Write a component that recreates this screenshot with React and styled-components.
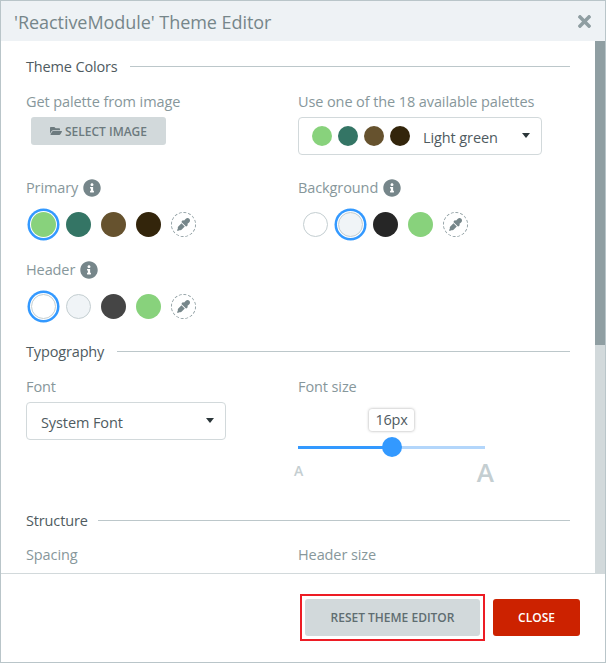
import React from "react";
import styled, { createGlobalStyle } from "styled-components";
import { FaEyeDropper, FaFolderOpen, FaInfoCircle, FaTimes } from "react-icons/fa";

const GlobalStyle = createGlobalStyle`
  html, body {
    margin: 0;
    padding: 0;
    background: #fff;
    font-family: "Open Sans", "Noto Sans", sans-serif;
  }
  * {
    box-sizing: border-box;
  }
`;

const PALETTE = ["#88d27c", "#347565", "#66522e", "#33250b"];

const App = () => {
  return (
    <Modal>
      <GlobalStyle />
      <Header>
        <Title>'ReactiveModule' Theme Editor</Title>
        <CloseIcon>
          <FaTimes />
        </CloseIcon>
      </Header>

      <BodyWrap>
        <Content>
          <SectionTitle $gap={12}>Theme Colors</SectionTitle>
          <Row>
            <div>
              <Label>Get palette from image</Label>
              <SelectImage>
                <FaFolderOpen />
                SELECT IMAGE
              </SelectImage>
            </div>
            <div>
              <Label>Use one of the 18 available palettes</Label>
              <Dropdown $width={244} $padLeft={13}>
                <PaletteDots>
                  {PALETTE.map((c) => (
                    <PaletteDot key={c} $color={c} />
                  ))}
                </PaletteDots>
                <DropdownText>Light green</DropdownText>
                <Caret />
              </Dropdown>
            </div>
          </Row>

          <Row $top={23}>
            <ColorField label="Primary" colors={["#88d27c", "#347565", "#66522e", "#33250b"]} selected={0} />
            <ColorField label="Background" colors={["#ffffff", "#f0f4f7", "#262626", "#88d27c"]} selected={1} />
          </Row>

          <Row $top={20}>
            <ColorField label="Header" colors={["#ffffff", "#f0f4f7", "#454545", "#88d27c"]} selected={0} />
          </Row>

          <SectionTitle $top={19} $gap={13}>Typography</SectionTitle>
          <Row $height={118}>
            <div>
              <Label>Font</Label>
              <Dropdown $width={200} $padLeft={14}>
                <DropdownText>System Font</DropdownText>
                <Caret />
              </Dropdown>
            </div>
            <div>
              <Label>Font size</Label>
              <Slider>
                <Tooltip>16px</Tooltip>
                <Track>
                  <TrackFill $percent={50} />
                </Track>
                <Thumb />
              </Slider>
              <SizeMarks>
                <SmallA>A</SmallA>
                <BigA>A</BigA>
              </SizeMarks>
            </div>
          </Row>

          <SectionTitle $top={15} $gap={10}>Structure</SectionTitle>
          <Row $top={15}>
            <Label>Spacing</Label>
            <Label>Header size</Label>
          </Row>
        </Content>
        <ScrollTrack>
          <ScrollThumb />
        </ScrollTrack>
      </BodyWrap>

      <Footer>
        <Highlight>
          <Button>RESET THEME EDITOR</Button>
        </Highlight>
        <Button $primary>CLOSE</Button>
      </Footer>
    </Modal>
  );
};

const ColorField = ({ label, colors, selected }) => (
  <div>
    <LabelRow>
      <FieldLabel>{label}</FieldLabel>
      <FaInfoCircle />
    </LabelRow>
    <Swatches>
      {colors.map((c, i) => (
        <Swatch key={c} $color={c} $selected={i === selected} $light={c === "#ffffff" || c === "#f0f4f7"} />
      ))}
      <Picker>
        <FaEyeDropper />
      </Picker>
    </Swatches>
  </div>
);

const Modal = styled.div`
  width: 606px;
  height: 663px;
  display: flex;
  flex-direction: column;
  border: 1px solid #b9c5c9;
  overflow: hidden;
  background: #fff;
`;

const Header = styled.div`
  height: 40px;
  flex: none;
  display: flex;
  align-items: center;
  justify-content: space-between;
  padding: 0 11px 0 13px;
  background: #eef2f5;
`;

const Title = styled.div`
  margin-top: 2px;
  font-size: 18px;
  font-weight: 500;
  letter-spacing: -0.05px;
  color: #76868a;
`;

const CloseIcon = styled.div`
  display: flex;
  color: #8f9ea2;
  font-size: 19px;
`;

const BodyWrap = styled.div`
  flex: 1;
  min-height: 0;
  display: flex;
`;

const Content = styled.div`
  flex: 1;
  min-width: 0;
  overflow: hidden;
  padding: 15px 25px 0 25px;
`;

const ScrollTrack = styled.div`
  width: 10px;
  flex: none;
  background: #d2d9db;
`;

const ScrollThumb = styled.div`
  height: 304px;
  background: #8f9ea2;
`;

const SectionTitle = styled.div`
  display: flex;
  align-items: center;
  gap: ${(p) => p.$gap}px;
  height: 20px;
  margin-top: ${(p) => p.$top || 0}px;
  font-size: 14.5px;
  letter-spacing: -0.15px;
  color: #4f5b5f;

  &::after {
    content: "";
    flex: 1;
    height: 1px;
    background: #bcc7ca;
  }
`;

const Row = styled.div`
  display: grid;
  grid-template-columns: 272px 272px;
  margin-top: ${(p) => (p.$top === undefined ? 16 : p.$top)}px;
  ${(p) => p.$height && `height: ${p.$height}px;`}
`;

const Label = styled.div`
  height: 20px;
  line-height: 20px;
  font-size: 14.5px;
  letter-spacing: -0.1px;
  color: #87979b;
`;

const LabelRow = styled.div`
  display: flex;
  align-items: center;
  gap: 5px;
  height: 20px;
  color: #76868a;

  svg {
    font-size: 18px;
  }
`;

const FieldLabel = styled.span`
  margin-bottom: 1px;
  font-size: 14.5px;
  letter-spacing: -0.1px;
  color: #87979b;
`;

const SelectImage = styled.button`
  display: flex;
  align-items: center;
  justify-content: center;
  gap: 3px;
  width: 135px;
  height: 28px;
  margin: 5px 0 0 5px;
  padding: 0;
  border: none;
  border-radius: 3px;
  background: #d2d9db;
  color: #6c7a7e;
  font-family: inherit;
  font-size: 12px;
  font-weight: 600;
  letter-spacing: 0;

  svg {
    font-size: 12px;
  }
`;

const Dropdown = styled.div`
  position: relative;
  display: flex;
  align-items: center;
  width: ${(p) => p.$width}px;
  height: 38px;
  margin-top: 5px;
  padding: 0 14px 0 ${(p) => p.$padLeft}px;
  border: 1px solid #d2d9db;
  border-radius: 4px;
  background: #fff;
`;

const PaletteDots = styled.div`
  display: flex;
  gap: 6px;
  margin-right: 13px;
`;

const PaletteDot = styled.span`
  width: 20px;
  height: 20px;
  border-radius: 50%;
  background: ${(p) => p.$color};
`;

const DropdownText = styled.span`
  margin-top: 2px;
  font-size: 14.5px;
  letter-spacing: -0.1px;
  color: #4f5b5f;
`;

const Caret = styled.span`
  position: absolute;
  right: 11px;
  top: 15px;
  width: 0;
  height: 0;
  border-left: 4.5px solid transparent;
  border-right: 4.5px solid transparent;
  border-top: 5px solid #2b3639;
`;

const Swatches = styled.div`
  display: flex;
  align-items: center;
  gap: 10px;
  height: 32px;
  margin-top: 10px;
  padding-left: 5px;
`;

const Swatch = styled.span`
  width: 25px;
  height: 25px;
  border-radius: 50%;
  background: ${(p) => p.$color};
  ${(p) => p.$light && "border: 1px solid #c4ced1;"}
  ${(p) => p.$selected && "box-shadow: 0 0 0 1px #fff, 0 0 0 3.5px #3399ff;"}
`;

const Picker = styled.span`
  display: flex;
  align-items: center;
  justify-content: center;
  width: 25px;
  height: 25px;
  border: 1px dashed #8f9ea2;
  border-radius: 50%;
  color: #76868a;

  svg {
    font-size: 13px;
  }
`;

const Slider = styled.div`
  position: relative;
  width: 187px;
  height: 50px;
  margin-top: 12px;
`;

const Track = styled.div`
  position: absolute;
  left: 0;
  right: 0;
  top: 37px;
  height: 3px;
  background: #b3d6fb;
`;

const TrackFill = styled.div`
  width: ${(p) => p.$percent}%;
  height: 100%;
  background: #3399ff;
`;

const Thumb = styled.div`
  position: absolute;
  left: 84px;
  top: 28px;
  width: 20px;
  height: 20px;
  border-radius: 50%;
  background: #3399ff;
`;

const Tooltip = styled.div`
  position: absolute;
  left: 71px;
  top: 0;
  width: 45px;
  height: 22px;
  line-height: 21px;
  text-align: center;
  font-size: 14.5px;
  letter-spacing: -0.2px;
  color: #4f5b5f;
  background: #fff;
  border-radius: 3px;
  box-shadow: 0 0 3px rgba(0, 0, 0, 0.35);
`;

const SizeMarks = styled.div`
  display: flex;
  align-items: flex-start;
  justify-content: space-between;
  width: 200px;
  margin-left: -4px;
  height: 28px;
`;

const SmallA = styled.span`
  margin-top: 3px;
  font-size: 14px;
  line-height: 18px;
  font-weight: 600;
  color: #c4ced1;
`;

const BigA = styled.span`
  margin-top: 1px;
  font-size: 26px;
  line-height: 24px;
  color: #c4ced1;
  font-weight: 600;
`;

const Footer = styled.div`
  height: 89px;
  flex: none;
  display: flex;
  align-items: center;
  justify-content: flex-end;
  gap: 8px;
  padding: 0 25px 1px 0;
  border-top: 1px solid #d2d9db;
  background: #fff;
`;

const Highlight = styled.div`
  display: flex;
  padding: 3px;
  border: 2px solid #ed1c24;
`;

const Button = styled.button`
  height: 37px;
  width: ${(p) => (p.$primary ? 87 : 175)}px;
  padding: 0;
  border: none;
  border-radius: 3px;
  font-family: inherit;
  font-size: 12px;
  font-weight: 600;
  letter-spacing: 0;
  background: ${(p) => (p.$primary ? "#cc2200" : "#d2d9db")};
  color: ${(p) => (p.$primary ? "#fff" : "#5f6d71")};
`;

export default App;
